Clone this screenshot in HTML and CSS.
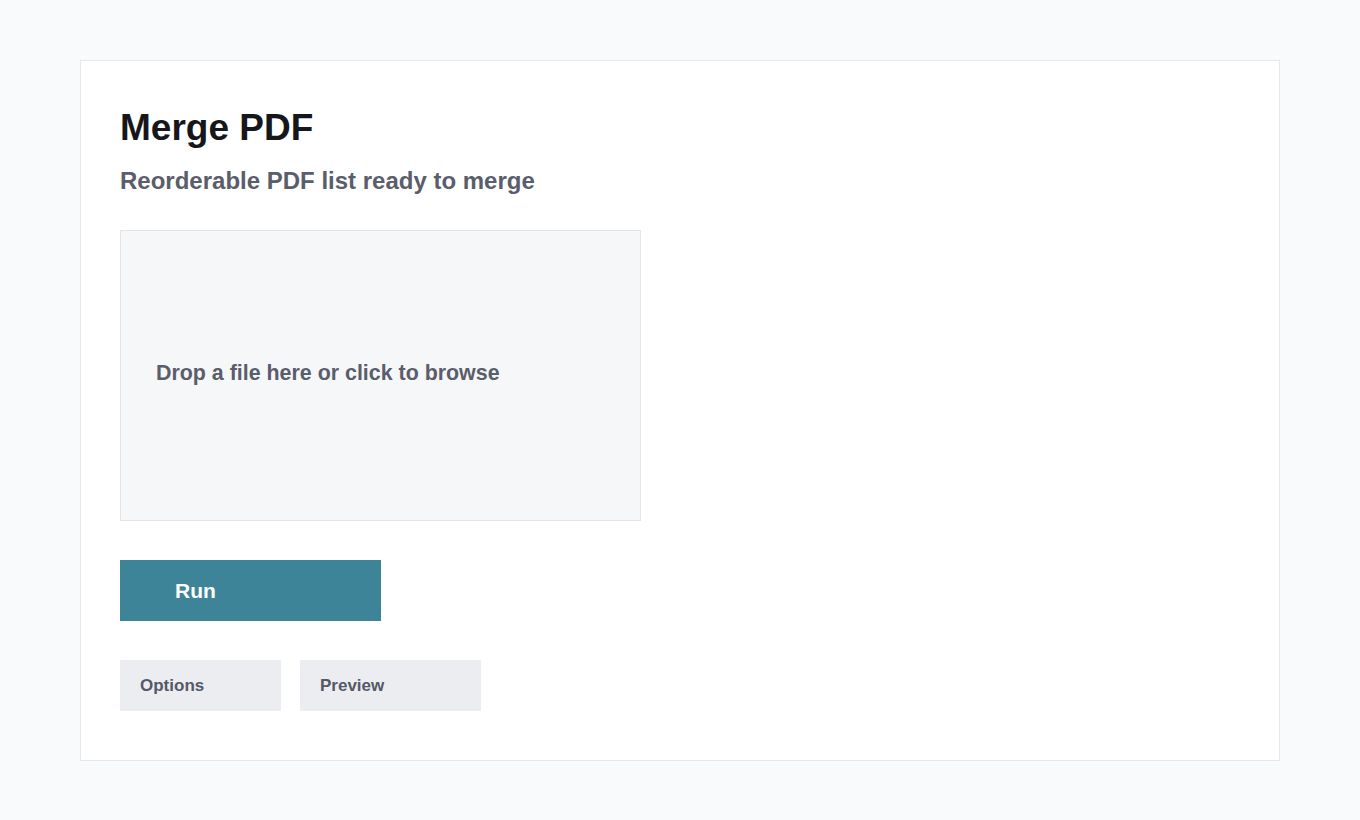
FILE: index.html
```html
<!DOCTYPE html>
<html lang="en">
<head>
<meta charset="utf-8">
<title>Merge PDF</title>
<link rel="stylesheet" href="styles.css">
</head>
<body>
<main class="card">
  <h1 class="title">Merge PDF</h1>
  <p class="subtitle">Reorderable PDF list ready to merge</p>
  <div class="dropzone">Drop a file here or click to browse</div>
  <button class="run" type="button">Run</button>
  <div class="tabs">
    <button class="tab tab-options" type="button">Options</button>
    <button class="tab tab-preview" type="button">Preview</button>
  </div>
</main>
</body>
</html>
```

FILE: styles.css
```css
html, body {
  margin: 0;
  padding: 0;
}
body {
  background: #f9fafb;
  font-family: "Liberation Sans", Arial, Helvetica, sans-serif;
  padding: 60px 80px;
}
.card {
  box-sizing: border-box;
  width: 1200px;
  height: 701px;
  background: #ffffff;
  border: 1px solid #e5e7eb;
  padding: 45px 39px;
  display: flex;
  flex-direction: column;
  align-items: flex-start;
}
.title {
  margin: 0;
  font-size: 37px;
  line-height: 44px;
  font-weight: 700;
  color: #16171b;
}
.subtitle {
  margin: 16px 0 0;
  font-size: 24px;
  line-height: 30px;
  font-weight: 700;
  color: #5a5d6b;
}
.dropzone {
  box-sizing: border-box;
  margin-top: 34px;
  width: 521px;
  height: 291px;
  background: #f6f7f8;
  border: 1px solid #e3e4e6;
  padding: 0 35px 5px;
  display: flex;
  align-items: center;
  font-size: 21.4px;
  font-weight: 700;
  color: #5a5d6b;
}
.run {
  box-sizing: border-box;
  margin-top: 39px;
  width: 261px;
  height: 61px;
  border: 0;
  padding: 0 0 0 55px;
  background: #3d8499;
  color: #ffffff;
  font-family: inherit;
  font-size: 21px;
  font-weight: 700;
  text-align: left;
}
.tabs {
  margin-top: 39px;
  display: flex;
  gap: 19px;
}
.tab {
  box-sizing: border-box;
  height: 51px;
  border: 0;
  padding: 0 0 0 20px;
  background: #ecedf1;
  color: #555867;
  font-family: inherit;
  font-size: 17px;
  font-weight: 700;
  text-align: left;
}
.tab-options {
  width: 161px;
}
.tab-preview {
  width: 181px;
}
```
